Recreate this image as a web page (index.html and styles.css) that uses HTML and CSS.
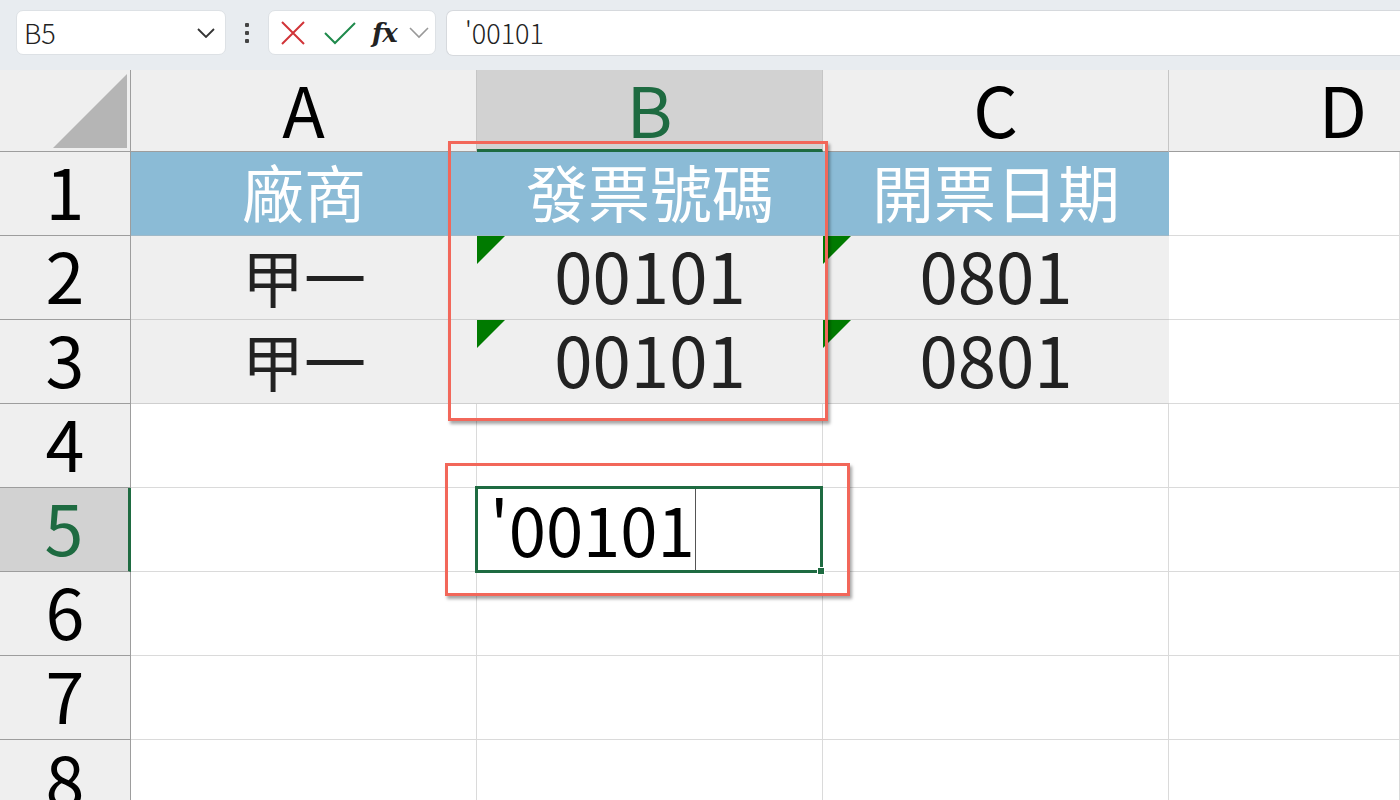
FILE: index.html
```html
<!DOCTYPE html>
<html lang="zh-Hant">
<head>
<meta charset="utf-8">
<title>Excel</title>
<link rel="stylesheet" href="styles.css">
</head>
<body>
<div class="app">
  <div class="toolbar">
    <div class="namebox">
      <span class="name">B5</span>
      <svg class="chev" width="18" height="10" viewBox="0 0 18 10"><path d="M1 1 L9 9 L17 1" fill="none" stroke="#333" stroke-width="1.8"/></svg>
    </div>
    <div class="dots"><span></span><span></span><span></span></div>
    <div class="fxbox">
      <svg class="ico" width="26" height="26" viewBox="0 0 26 26"><path d="M2 2 L24 24 M24 2 L2 24" stroke="#d13438" stroke-width="2" fill="none"/></svg>
      <svg class="ico" width="34" height="26" viewBox="0 0 34 26"><path d="M2 13 L12 23 L32 3" stroke="#1f8a4c" stroke-width="2" fill="none"/></svg>
      <span class="fx">fx</span>
      <svg class="chev2" width="20" height="12" viewBox="0 0 20 12"><path d="M1 1 L10 10 L19 1" fill="none" stroke="#999" stroke-width="1.6"/></svg>
    </div>
    <div class="formula">'00101</div>
  </div>

  <div class="sheet">
    <div class="grid">
      <div class="corner"><div class="tri"></div></div>
      <div class="ch">A</div>
      <div class="ch sel">B</div>
      <div class="ch">C</div>
      <div class="ch last">D</div>

      <div class="rh">1</div>
      <div class="c hdr">廠商</div>
      <div class="c hdr">發票號碼</div>
      <div class="c hdr">開票日期</div>
      <div class="c"></div>

      <div class="rh">2</div>
      <div class="c gray cjk">甲一</div>
      <div class="c gray num"><i class="flag"></i>00101</div>
      <div class="c gray num"><i class="flag"></i>0801</div>
      <div class="c"></div>

      <div class="rh">3</div>
      <div class="c gray cjk">甲一</div>
      <div class="c gray num"><i class="flag"></i>00101</div>
      <div class="c gray num"><i class="flag"></i>0801</div>
      <div class="c"></div>

      <div class="rh">4</div>
      <div class="c"></div><div class="c"></div><div class="c"></div><div class="c"></div>

      <div class="rh selrow">5</div>
      <div class="c"></div>
      <div class="c active"><span class="edit">'00101</span><span class="caret"></span><i class="handle"></i></div>
      <div class="c"></div><div class="c"></div>

      <div class="rh">6</div>
      <div class="c"></div><div class="c"></div><div class="c"></div><div class="c"></div>
      <div class="rh">7</div>
      <div class="c"></div><div class="c"></div><div class="c"></div><div class="c"></div>
      <div class="rh">8</div>
      <div class="c"></div><div class="c"></div><div class="c"></div><div class="c"></div>
    </div>
    <div class="mark mark1"></div>
    <div class="mark mark2"></div>
  </div>
</div>
</body>
</html>
```

FILE: styles.css
```css
* { box-sizing: border-box; }
html, body { margin: 0; padding: 0; }
body {
  width: 1400px;
  height: 800px;
  overflow: hidden;
  background: #ffffff;
  font-family: "Noto Sans CJK TC", "Noto Sans", sans-serif;
}
.app { display: flex; flex-direction: column; height: 800px; }

.toolbar {
  height: 70px;
  flex: none;
  background: #e8ecf0;
  display: flex;
  align-items: center;
  padding: 0 0 5px 16px;
}
.namebox {
  width: 210px;
  height: 45px;
  background: #fff;
  border: 1px solid #dde1e5;
  border-radius: 7px;
  display: flex;
  align-items: center;
  justify-content: space-between;
  padding: 0 10px 0 7px;
}
.name { font-size: 27px; color: #222; line-height: 1; font-weight: 300; }
.dots {
  width: 42px;
  display: flex;
  flex-direction: column;
  align-items: center;
  gap: 4px;
}
.dots span { width: 4px; height: 4px; background: #444; border-radius: 1px; }
.fxbox {
  width: 168px;
  height: 45px;
  background: #fff;
  border: 1px solid #dde1e5;
  border-radius: 7px;
  display: flex;
  align-items: center;
  padding: 0 0 0 11px;
  gap: 17px;
}
.fxbox .ico { flex: none; }
.fx {
  font-family: "DejaVu Serif", "Liberation Serif", serif;
  font-style: italic;
  font-weight: bold;
  font-size: 26px;
  color: #222;
  margin-left: -2px;
  letter-spacing: -1px;
}
.chev2 { margin-left: -5px; }
.formula {
  flex: 1;
  margin-left: 10px;
  height: 46px;
  background: #fff;
  border: 1px solid #d6d9dd;
  border-right: none;
  border-radius: 7px 0 0 7px;
  font-size: 27px;
  font-weight: 300;
  color: #222;
  display: flex;
  align-items: center;
  padding-left: 18px;
  line-height: 1;
}

.sheet { position: relative; flex: 1; overflow: hidden; }
.grid {
  display: grid;
  grid-template-columns: 131px 346px 346px 346px 231px;
  grid-template-rows: 82px repeat(8, 84px);
}
.corner {
  background: #efefef;
  border-right: 1px solid #9d9d9d;
  border-bottom: 1px solid #9d9d9d;
  position: relative;
}
.tri {
  position: absolute;
  right: 3px;
  bottom: 3px;
  width: 74px;
  height: 74px;
  background: #b5b5b5;
  clip-path: polygon(100% 0, 100% 100%, 0 100%);
}
.ch {
  background: #efefef;
  border-right: 1px solid #c5c5c5;
  border-bottom: 1px solid #9d9d9d;
  display: flex;
  align-items: center;
  justify-content: center;
  font-size: 70px;
  color: #000;
  line-height: 1;
  padding-bottom: 6px;
}
.ch.last { justify-content: flex-end; padding-right: 33px; border-right: none; }
.ch.sel {
  background: #d2d2d2;
  color: #1e6b41;
  border-bottom: 3px solid #1e6b41;
  padding-bottom: 4px;
}
.rh {
  background: #efefef;
  border-right: 1px solid #9d9d9d;
  border-bottom: 1px solid #9d9d9d;
  display: flex;
  align-items: center;
  justify-content: center;
  font-size: 70px;
  line-height: 1;
  color: #000;
  padding-bottom: 8px;
}
.rh.selrow {
  background: #d2d2d2;
  color: #1e6b41;
  border-right: 3px solid #1e6b41;
}
.c {
  border-right: 1px solid #dadada;
  border-bottom: 1px solid #dadada;
  display: flex;
  align-items: center;
  justify-content: center;
  position: relative;
  line-height: 1;
}
.hdr {
  background: #8bbbd6;
  color: #fff;
  font-size: 62px;
  border-right: none;
  border-bottom-color: #9fb9c8;
  padding-bottom: 5px;
}
.gray { background: #efefef; border-color: #cfcfcf; border-right: none; }
.cjk { font-size: 62px; color: #222; padding-bottom: 4px; }
.num { font-size: 69px; color: #222; padding-bottom: 6px; }
.flag {
  position: absolute;
  left: 0;
  top: 0;
  width: 28px;
  height: 28px;
  background: #007a00;
  clip-path: polygon(0 0, 100% 0, 0 100%);
}
.active {
  border: 3px solid #1e6b41;
  margin: -2px 0 -1px -2px;
  justify-content: flex-start;
  padding-left: 12px;
  padding-bottom: 4px;
  font-size: 67px;
  color: #000;
  z-index: 2;
}
.edit { display: block; }
.caret {
  align-self: stretch;
  display: block;
  width: 1px;
  margin: 0 0 -4px 0;
  background: #555;
}
.handle {
  position: absolute;
  right: -5px;
  bottom: -5px;
  width: 8px;
  height: 8px;
  background: #1e6b41;
  border: 1px solid #fff;
}
.mark {
  position: absolute;
  border: 3px solid #f2675a;
  box-shadow: 2px 3px 3px rgba(0,0,0,0.35);
  pointer-events: none;
}
.mark1 { left: 448px; top: 71px; width: 380px; height: 280px; }
.mark2 { left: 445px; top: 393px; width: 405px; height: 133px; }
```
